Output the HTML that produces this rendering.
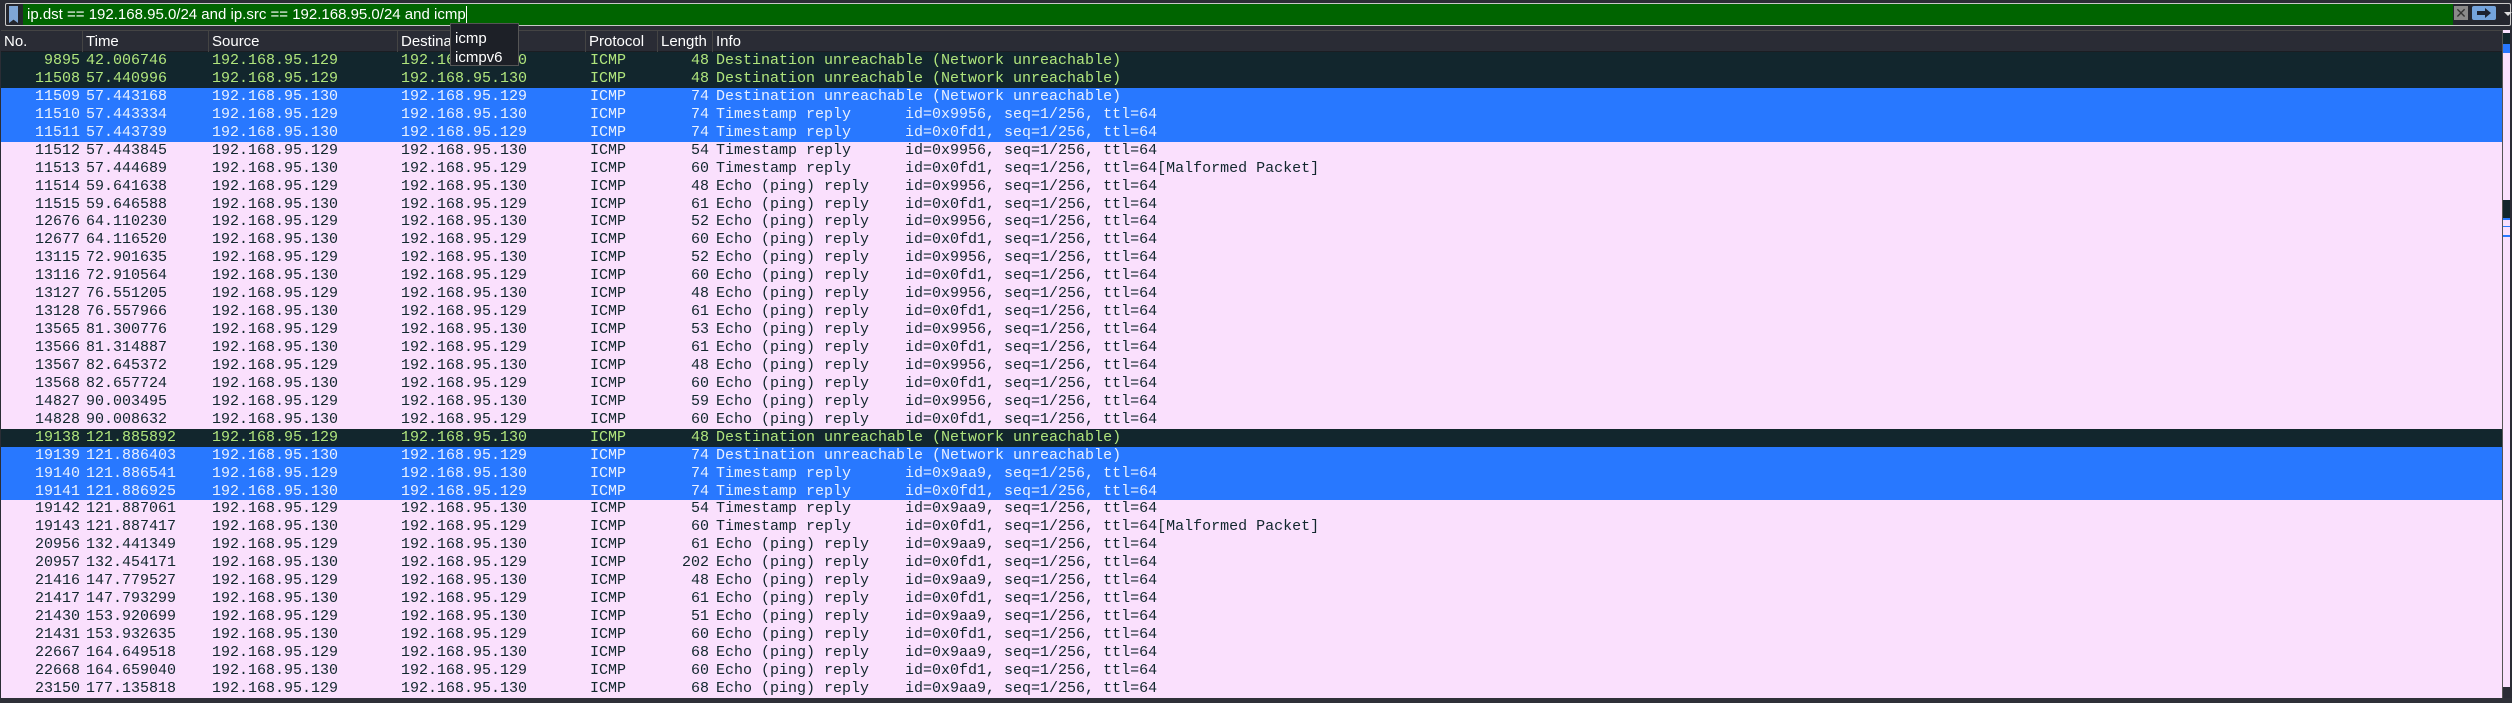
<!DOCTYPE html>
<html><head><meta charset="utf-8"><style>
*{margin:0;padding:0;box-sizing:border-box}
body{width:2512px;height:703px;background:#2b2d35;overflow:hidden;position:relative;font-family:"Liberation Sans",sans-serif}
#fb{position:absolute;left:5px;top:3px;width:2506px;height:23px;border:1px solid #c8c8c8;border-radius:2px;background:#24262e}
#bm{position:absolute;left:3px;top:2px;width:9px;height:17px;background:#7fa6d6;clip-path:polygon(0 0,100% 0,100% 100%,50% 80%,0 100%)}
#gr{position:absolute;left:17px;top:0;width:2430px;height:21px;background:#006400;color:#fff;font-size:15px;line-height:21px;padding-left:4px;white-space:pre}
#gr span{border-right:1px solid #fff}
#clr{position:absolute;left:2448px;top:2px;width:14px;height:14px;background:#8a8a8a;color:#333;font-size:14px;line-height:14px;text-align:center}
#go{position:absolute;left:2466px;top:2px;width:24px;height:14px;background:#74a4dc;border-radius:2px}
#dd{position:absolute;left:2498px;top:8px;width:0;height:0;border-left:4px solid transparent;border-right:4px solid transparent;border-top:4px solid #ddd}
#hd{position:absolute;left:1px;top:30px;width:2501px;height:22px;background:#2a2c35;border-top:1px solid #444;border-bottom:1px solid #1b1d22;color:#fff;font-size:15px;line-height:21px}
#hd span{position:absolute;top:0;height:21px;padding-left:3px;border-left:1px solid #444}
#list{position:absolute;left:1px;top:52px;width:2501px;font-family:"Liberation Mono",monospace;font-size:15px}
.r{height:17.95px;line-height:18px;position:relative;white-space:pre}
.r span{position:absolute;top:0}
.d{background:#12262d;color:#b0e57c}
.b{background:#2878ff;color:#e8f0ff}
.p{background:#fae0fd;color:#12272e}
#pop{position:absolute;left:450px;top:23px;width:69px;height:43px;background:#1d2027;border:1px solid #555;color:#fff;font-size:15px;line-height:19px;padding:5px 0 0 4px}
#mm{position:absolute;left:2503px;top:30px;width:7px;height:673px;background:#fae0fd}
#bot{position:absolute;left:0;top:698px;width:2512px;height:5px;background:#2e3038}
#sep{position:absolute;left:2502px;top:30px;width:1px;height:673px;background:#555}
</style></head><body>
<div id="fb"><div id="bm"></div><div id="gr">ip.dst == 192.168.95.0/24 and ip.src == 192.168.95.0/24 and <span>icmp</span></div><div id="clr">✕</div><div id="go"><svg width="24" height="14"><path d="M5 5h8V2l6 5-6 5V9H5z" fill="#1c2230"/></svg></div><div id="dd"></div></div>
<div id="hd"><span style="left:0;border:0">No.</span><span style="left:81px">Time</span><span style="left:207px">Source</span><span style="left:396px">Destination</span><span style="left:584px">Protocol</span><span style="left:656px">Length</span><span style="left:711px">Info</span></div>
<div id="list">
</div>
<div id="sep"></div>
<div id="mm">
<div style="position:absolute;top:3px;height:11px;width:7px;background:#12262d"></div>
<div style="position:absolute;top:14px;height:9px;width:7px;background:#2878ff"></div>
<div style="position:absolute;top:170px;height:18px;width:7px;background:#12262d"></div>
<div style="position:absolute;top:188px;height:2px;width:7px;background:#2878ff"></div>
<div style="position:absolute;top:196px;height:1px;width:7px;background:#2878ff"></div>
<div style="position:absolute;top:205px;height:2px;width:7px;background:#2878ff"></div>
<div style="position:absolute;top:657px;height:16px;width:7px;background:#2a2c35"></div>
</div>
<div id="bot"></div>
<div id="pop">icmp<br>icmpv6</div>
<script>
var rows=[
["d","9895","42.006746","192.168.95.129","192.168.95.130","48","Destination unreachable (Network unreachable)"],
["d","11508","57.440996","192.168.95.129","192.168.95.130","48","Destination unreachable (Network unreachable)"],
["b","11509","57.443168","192.168.95.130","192.168.95.129","74","Destination unreachable (Network unreachable)"],
["b","11510","57.443334","192.168.95.129","192.168.95.130","74","Timestamp reply      id=0x9956, seq=1/256, ttl=64"],
["b","11511","57.443739","192.168.95.130","192.168.95.129","74","Timestamp reply      id=0x0fd1, seq=1/256, ttl=64"],
["p","11512","57.443845","192.168.95.129","192.168.95.130","54","Timestamp reply      id=0x9956, seq=1/256, ttl=64"],
["p","11513","57.444689","192.168.95.130","192.168.95.129","60","Timestamp reply      id=0x0fd1, seq=1/256, ttl=64[Malformed Packet]"],
["p","11514","59.641638","192.168.95.129","192.168.95.130","48","Echo (ping) reply    id=0x9956, seq=1/256, ttl=64"],
["p","11515","59.646588","192.168.95.130","192.168.95.129","61","Echo (ping) reply    id=0x0fd1, seq=1/256, ttl=64"],
["p","12676","64.110230","192.168.95.129","192.168.95.130","52","Echo (ping) reply    id=0x9956, seq=1/256, ttl=64"],
["p","12677","64.116520","192.168.95.130","192.168.95.129","60","Echo (ping) reply    id=0x0fd1, seq=1/256, ttl=64"],
["p","13115","72.901635","192.168.95.129","192.168.95.130","52","Echo (ping) reply    id=0x9956, seq=1/256, ttl=64"],
["p","13116","72.910564","192.168.95.130","192.168.95.129","60","Echo (ping) reply    id=0x0fd1, seq=1/256, ttl=64"],
["p","13127","76.551205","192.168.95.129","192.168.95.130","48","Echo (ping) reply    id=0x9956, seq=1/256, ttl=64"],
["p","13128","76.557966","192.168.95.130","192.168.95.129","61","Echo (ping) reply    id=0x0fd1, seq=1/256, ttl=64"],
["p","13565","81.300776","192.168.95.129","192.168.95.130","53","Echo (ping) reply    id=0x9956, seq=1/256, ttl=64"],
["p","13566","81.314887","192.168.95.130","192.168.95.129","61","Echo (ping) reply    id=0x0fd1, seq=1/256, ttl=64"],
["p","13567","82.645372","192.168.95.129","192.168.95.130","48","Echo (ping) reply    id=0x9956, seq=1/256, ttl=64"],
["p","13568","82.657724","192.168.95.130","192.168.95.129","60","Echo (ping) reply    id=0x0fd1, seq=1/256, ttl=64"],
["p","14827","90.003495","192.168.95.129","192.168.95.130","59","Echo (ping) reply    id=0x9956, seq=1/256, ttl=64"],
["p","14828","90.008632","192.168.95.130","192.168.95.129","60","Echo (ping) reply    id=0x0fd1, seq=1/256, ttl=64"],
["d","19138","121.885892","192.168.95.129","192.168.95.130","48","Destination unreachable (Network unreachable)"],
["b","19139","121.886403","192.168.95.130","192.168.95.129","74","Destination unreachable (Network unreachable)"],
["b","19140","121.886541","192.168.95.129","192.168.95.130","74","Timestamp reply      id=0x9aa9, seq=1/256, ttl=64"],
["b","19141","121.886925","192.168.95.130","192.168.95.129","74","Timestamp reply      id=0x0fd1, seq=1/256, ttl=64"],
["p","19142","121.887061","192.168.95.129","192.168.95.130","54","Timestamp reply      id=0x9aa9, seq=1/256, ttl=64"],
["p","19143","121.887417","192.168.95.130","192.168.95.129","60","Timestamp reply      id=0x0fd1, seq=1/256, ttl=64[Malformed Packet]"],
["p","20956","132.441349","192.168.95.129","192.168.95.130","61","Echo (ping) reply    id=0x9aa9, seq=1/256, ttl=64"],
["p","20957","132.454171","192.168.95.130","192.168.95.129","202","Echo (ping) reply    id=0x0fd1, seq=1/256, ttl=64"],
["p","21416","147.779527","192.168.95.129","192.168.95.130","48","Echo (ping) reply    id=0x9aa9, seq=1/256, ttl=64"],
["p","21417","147.793299","192.168.95.130","192.168.95.129","61","Echo (ping) reply    id=0x0fd1, seq=1/256, ttl=64"],
["p","21430","153.920699","192.168.95.129","192.168.95.130","51","Echo (ping) reply    id=0x9aa9, seq=1/256, ttl=64"],
["p","21431","153.932635","192.168.95.130","192.168.95.129","60","Echo (ping) reply    id=0x0fd1, seq=1/256, ttl=64"],
["p","22667","164.649518","192.168.95.129","192.168.95.130","68","Echo (ping) reply    id=0x9aa9, seq=1/256, ttl=64"],
["p","22668","164.659040","192.168.95.130","192.168.95.129","60","Echo (ping) reply    id=0x0fd1, seq=1/256, ttl=64"],
["p","23150","177.135818","192.168.95.129","192.168.95.130","68","Echo (ping) reply    id=0x9aa9, seq=1/256, ttl=64"]];
var h="";rows.forEach(function(r){h+='<div class="r '+r[0]+'"><span style="right:2422px">'+r[1]+'</span><span style="left:85px">'+r[2]+'</span><span style="left:211px">'+r[3]+'</span><span style="left:400px">'+r[4]+'</span><span style="left:589px">ICMP</span><span style="right:1793px">'+r[5]+'</span><span style="left:715px">'+r[6]+'</span></div>';});
document.getElementById("list").innerHTML=h;
</script>
</body></html>
